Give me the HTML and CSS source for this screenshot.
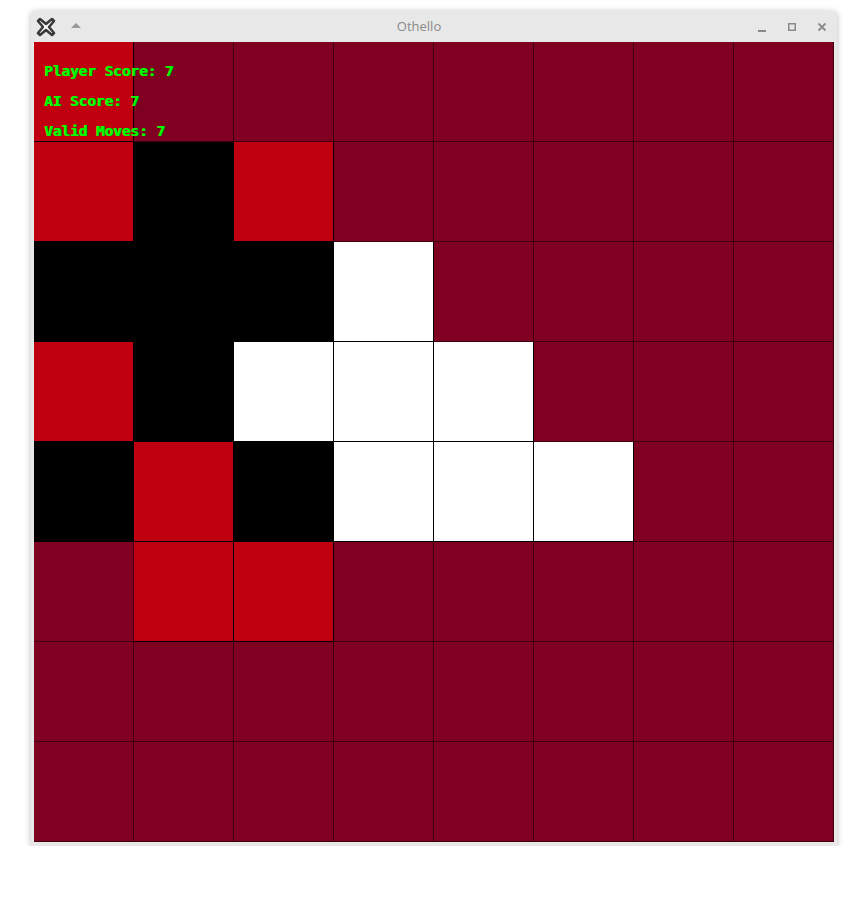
FILE: index.html
```html
<!DOCTYPE html>
<html>
<head>
<meta charset="utf-8">
<link rel="stylesheet" href="styles.css">
</head>
<body>
<div class="page">
  <div class="window">
    <div class="titlebar">
      <div class="tb-left">
        <svg class="logo" width="20" height="20" viewBox="0 0 20 20">
          <path d="M4 2 L10 7 L16 2 L18 4 L13 10 L18 16 L16 18 L10 13 L4 18 L2 16 L7 10 L2 4 Z" fill="#ffffff" stroke="#3a3a3a" stroke-width="2.6" stroke-linejoin="round"/>
        </svg>
        <svg class="up" width="12" height="8" viewBox="0 0 12 8"><path d="M1 7 L6 2 L11 7 Z" fill="#9a9a9a"/></svg>
      </div>
      <div class="title">Othello</div>
      <div class="tb-right">
        <svg width="12" height="12" viewBox="0 0 12 12"><rect x="2" y="9" width="8" height="2" fill="#8a8a8a"/></svg>
        <svg width="12" height="12" viewBox="0 0 12 12"><rect x="2.75" y="2.75" width="6.5" height="6.5" fill="none" stroke="#8a8a8a" stroke-width="1.5"/></svg>
        <svg width="12" height="12" viewBox="0 0 12 12"><path d="M2.5 2.5 L9.5 9.5 M9.5 2.5 L2.5 9.5" stroke="#8a8a8a" stroke-width="1.8"/></svg>
      </div>
    </div>
    <div class="board">
      <div class="c r"></div><div class="c d"></div><div class="c d"></div><div class="c d"></div><div class="c d"></div><div class="c d"></div><div class="c d"></div><div class="c d"></div>
      <div class="c r"></div><div class="c b"></div><div class="c r"></div><div class="c d"></div><div class="c d"></div><div class="c d"></div><div class="c d"></div><div class="c d"></div>
      <div class="c b"></div><div class="c b"></div><div class="c b"></div><div class="c w"></div><div class="c d"></div><div class="c d"></div><div class="c d"></div><div class="c d"></div>
      <div class="c r"></div><div class="c b"></div><div class="c w"></div><div class="c w"></div><div class="c w"></div><div class="c d"></div><div class="c d"></div><div class="c d"></div>
      <div class="c b"></div><div class="c r"></div><div class="c b"></div><div class="c w"></div><div class="c w"></div><div class="c w"></div><div class="c d"></div><div class="c d"></div>
      <div class="c d"></div><div class="c r"></div><div class="c r"></div><div class="c d"></div><div class="c d"></div><div class="c d"></div><div class="c d"></div><div class="c d"></div>
      <div class="c d"></div><div class="c d"></div><div class="c d"></div><div class="c d"></div><div class="c d"></div><div class="c d"></div><div class="c d"></div><div class="c d"></div>
      <div class="c d"></div><div class="c d"></div><div class="c d"></div><div class="c d"></div><div class="c d"></div><div class="c d"></div><div class="c d"></div><div class="c d"></div>
      <div class="hud">
        <div class="hud-line">Player Score: 7</div>
        <div class="hud-line">AI Score: 7</div>
        <div class="hud-line">Valid Moves: 7</div>
      </div>
    </div>
  </div>
</div>
</body>
</html>
```
FILE: styles.css
```css
html, body {
  margin: 0;
  padding: 0;
  background: #ffffff;
}
.page {
  padding: 11px 0 0 31px;
}
.window {
  width: 806px;
  background: #e8e8e8;
  border-radius: 4px 4px 0 0;
  box-shadow: 0 1px 6px rgba(0,0,0,0.28);
  padding: 0 3px 4px 3px;
  box-sizing: border-box;
}
.titlebar {
  height: 31px;
  display: flex;
  align-items: center;
  justify-content: space-between;
  position: relative;
}
.tb-left {
  display: flex;
  align-items: center;
  gap: 14px;
  padding-left: 2px;
}
.logo { display: block; }
.up { display: block; margin-top: -3px; }
.title {
  position: absolute;
  left: 0;
  right: 30px;
  top: 6px;
  text-align: center;
  font-family: "Open Sans", "Noto Sans", sans-serif;
  font-size: 13px;
  color: #8a8a8a;
  pointer-events: none;
}
.tb-right {
  display: flex;
  align-items: center;
  gap: 18px;
  padding-right: 6px;
}
.tb-right svg { display: block; }
.board {
  position: relative;
  display: grid;
  grid-template-columns: repeat(8, 100px);
  grid-template-rows: repeat(8, 100px);
  width: 800px;
  height: 800px;
}
.c {
  box-sizing: border-box;
  border-right: 1px solid #000;
  border-bottom: 1px solid #000;
}
.d { background: #7f0020; border-color: #3c0010; }
.r { background: #c00010; }
.b { background: #000000; }
.w { background: #ffffff; }
.hud {
  position: absolute;
  left: 10px;
  top: 20px;
  display: flex;
  flex-direction: column;
  gap: 12px;
}
.hud-line {
  font-family: "DejaVu Sans Mono", monospace;
  font-weight: bold;
  font-size: 14.5px;
  line-height: 18px;
  color: #00ff00;
  text-shadow: 1px 0 0 #00c000;
  letter-spacing: -0.1px;
}
```
